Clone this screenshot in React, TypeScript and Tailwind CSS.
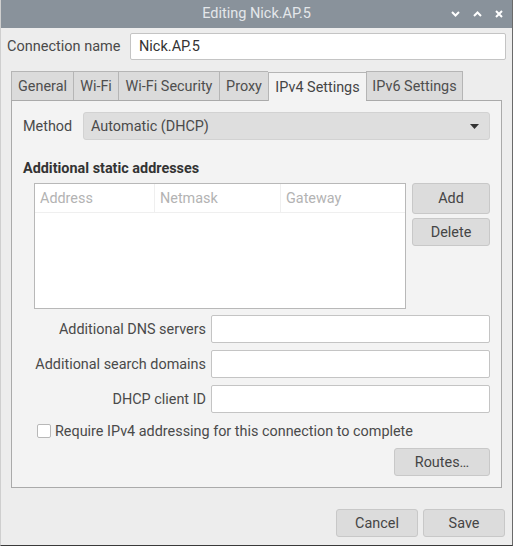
import React from "react";

const font = { fontFamily: "Roboto, 'Liberation Sans', sans-serif" };

function Btn({ children, className = "" }: { children: React.ReactNode; className?: string }) {
  return (
    <div
      className={
        "flex items-center justify-center pt-[1px] bg-[#dcdcdc] border border-[#c8c8c8] rounded-[3px] text-[14.4px] text-[#454545] " +
        className
      }
    >
      {children}
    </div>
  );
}

function Input({ value = "", className = "" }: { value?: string; className?: string }) {
  return (
    <div
      className={
        "flex items-center bg-white border border-[#c4c4c4] rounded-[2px] px-[8px] text-[14.4px] text-[#333] " +
        className
      }
    >
      {value}
    </div>
  );
}

export default function App() {
  const tabs = [
    { label: "General", w: 62 },
    { label: "Wi-Fi", w: 45 },
    { label: "Wi-Fi Security", w: 101 },
    { label: "Proxy", w: 49 },
    { label: "IPv4 Settings", w: 98, active: true },
    { label: "IPv6 Settings", w: 97 },
  ];
  return (
    <div
      style={font}
      className="w-[513px] h-[546px] bg-[#ededed] flex flex-col border-l border-l-[#cfcfcf] border-r border-r-[#6a6a6a] border-b border-b-[#3a3a3a] overflow-hidden text-[#4a4a4a]"
    >
      {/* Title bar */}
      <div className="relative h-[28px] shrink-0 bg-[#89929b] flex items-center justify-center">
        <span className="text-[14.5px] text-[#e4e7ea]">Editing Nick.AP.5</span>
        <div className="absolute right-[9px] top-0 h-[28px] flex items-center gap-[13px]">
          <svg width="9" height="6" viewBox="0 0 9 6">
            <path d="M1 1 L4.5 4.5 L8 1" stroke="#ffffff" strokeWidth="2" fill="none" />
          </svg>
          <svg width="9" height="6" viewBox="0 0 9 6">
            <path d="M1 5 L4.5 1.5 L8 5" stroke="#ffffff" strokeWidth="2" fill="none" />
          </svg>
          <svg width="8" height="8" viewBox="0 0 8 8">
            <path d="M1 1 L7 7 M7 1 L1 7" stroke="#ffffff" strokeWidth="2" fill="none" />
          </svg>
        </div>
      </div>

      {/* Connection name */}
      <div className="mt-[5px] h-[27px] flex items-center pl-[6px] pr-[6px]">
        <span className="text-[14.5px] pt-[1px] text-[#4a4a4a]">Connection name</span>
        <Input value="Nick.AP.5" className="ml-auto w-[376px] h-[27px] text-[14.5px]" />
      </div>

      {/* Tabs */}
      <div className="mt-[11px] ml-[10px] flex items-end h-[29px]">
        {tabs.map((t, i) => (
          <div
            key={t.label}
            style={{ width: t.w }}
            className={
              "flex items-center justify-center pt-[2px] text-[14.4px] border-t border-l border-[#b5b5b5] " +
              (i === tabs.length - 1 ? "border-r " : "") +
              (t.active
                ? "bg-[#f3f3f3] h-[29px] relative z-10 -mb-px text-[#454545]"
                : "bg-[#dbdbdb] h-[29px] text-[#4e4e4e]")
            }
          >
            {t.label}
          </div>
        ))}
      </div>

      {/* Panel */}
      <div className="ml-[10px] w-[491px] h-[388px] bg-[#f3f3f3] border border-[#aaaaaa] p-[11px] flex flex-col">
        <div className="h-[28px] flex items-center">
          <span className="w-[60px] pt-[1px] text-[14.4px] text-[#4a4a4a]">Method</span>
          <div className="flex-1 h-[28px] bg-[#dedede] border border-[#d2d2d2] rounded-[3px] flex items-center pt-[1px] pl-[7px] pr-[10px] text-[14.4px] text-[#4a4a4a]">
            <span>Automatic (DHCP)</span>
            <svg className="ml-auto" width="9" height="5" viewBox="0 0 9 5">
              <path d="M0 0 L9 0 L4.5 5 Z" fill="#333" />
            </svg>
          </div>
        </div>

        <div className="mt-[19px] pt-[1px] text-[14.4px] font-bold text-[#333] leading-[18px]">Additional static addresses</div>

        <div className="mt-[5px] ml-[11px] flex gap-[6px]">
          <div className="w-[372px] h-[126px] bg-white border border-[#b8b8b8] flex flex-col">
            <div className="h-[29px] flex border-b border-[#efefef] text-[14.4px] text-[#b3b3b3]">
              <div className="w-[120px] border-r border-[#efefef] flex items-center pt-[1px] pl-[5px]">Address</div>
              <div className="w-[126px] border-r border-[#efefef] flex items-center pt-[1px] pl-[5px]">Netmask</div>
              <div className="flex-1 flex items-center pt-[1px] pl-[5px]">Gateway</div>
            </div>
          </div>
          <div className="flex-1 flex flex-col gap-[4px]">
            <Btn className="h-[31px]">Add</Btn>
            <Btn className="h-[28px]">Delete</Btn>
          </div>
        </div>

        <div className="mt-[6px] flex flex-col gap-[7px]">
          {["Additional DNS servers", "Additional search domains", "DHCP client ID"].map((l) => (
            <div key={l} className="flex items-center h-[28px]">
              <span className="w-[183px] pt-[2px] text-right text-[14.4px] text-[#4a4a4a]">{l}</span>
              <Input className="ml-[5px] flex-1 h-[28px]" />
            </div>
          ))}
        </div>

        <div className="mt-[11px] ml-[14px] flex items-center h-[14px]">
          <div className="w-[14px] h-[14px] bg-white border border-[#b8b8b8] rounded-[2px]" />
          <span className="ml-[4px] pt-[1px] text-[14.4px] text-[#4a4a4a]">Require IPv4 addressing for this connection to complete</span>
        </div>

        <div className="mt-[10px] flex justify-end">
          <Btn className="w-[96px] h-[28px]">Routes…</Btn>
        </div>
      </div>

      {/* Bottom buttons */}
      <div className="mt-[21px] flex justify-end gap-[5px] pr-[7px]">
        <Btn className="w-[82px] h-[28px]">Cancel</Btn>
        <Btn className="w-[82px] h-[28px]">Save</Btn>
      </div>
    </div>
  );
}
